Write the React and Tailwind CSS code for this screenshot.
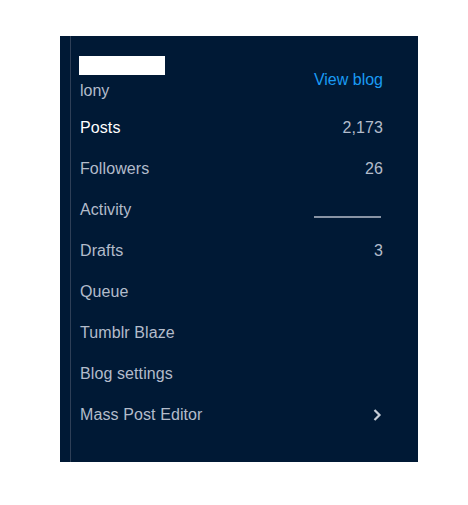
import React from 'react';

const rows = [
  { label: 'Posts', value: '2,173', active: true },
  { label: 'Followers', value: '26' },
  { label: 'Activity', line: true },
  { label: 'Drafts', value: '3' },
  { label: 'Queue' },
  { label: 'Tumblr Blaze' },
  { label: 'Blog settings' },
  { label: 'Mass Post Editor', chevron: true },
];

export default function App() {
  return (
    <div className="min-h-screen bg-white pl-[60px] pt-[36px]" style={{ fontFamily: '"Liberation Sans", Arial, sans-serif' }}>
      <div className="flex w-[358px] h-[426px] bg-[#001935]">
        <div className="w-[10px]" />
        <div className="w-px bg-[#2e3f57]" />
        <div className="flex-1 pl-[9px] pr-[35px] pt-[20px]">
          {/* header */}
          <div className="flex items-center justify-between">
            <div className="flex flex-col">
              <div className="-ml-px w-[86px] h-[19px] bg-white" />
              <div className="mt-[4px] text-[16px] leading-[24px] text-[#b3bccb]">lony</div>
            </div>
            <a className="text-[16px] leading-[24px] text-[#1a9bf4]">View blog</a>
          </div>

          <div className="mt-[4px] flex flex-col">
            {rows.map((r) => (
              <div key={r.label} className="h-[41px] flex items-center justify-between text-[16px] tracking-[0.1px]">
                <span className={r.active ? 'text-white' : 'text-[#b3bccb]'}>{r.label}</span>
                {r.value && <span className="text-[#b3bccb]">{r.value}</span>}
                {r.line && <span className="mt-[14px] mr-[2px] w-[67px] h-[2px] bg-[#8893a4]" />}
                {r.chevron && (
                  <svg width="10" height="14" viewBox="0 0 10 14" className="mr-[1px]">
                    <path d="M2.5 2 L7.5 7 L2.5 12" fill="none" stroke="#c5ccd6" strokeWidth="2.2" />
                  </svg>
                )}
              </div>
            ))}
          </div>
        </div>
      </div>
    </div>
  );
}
